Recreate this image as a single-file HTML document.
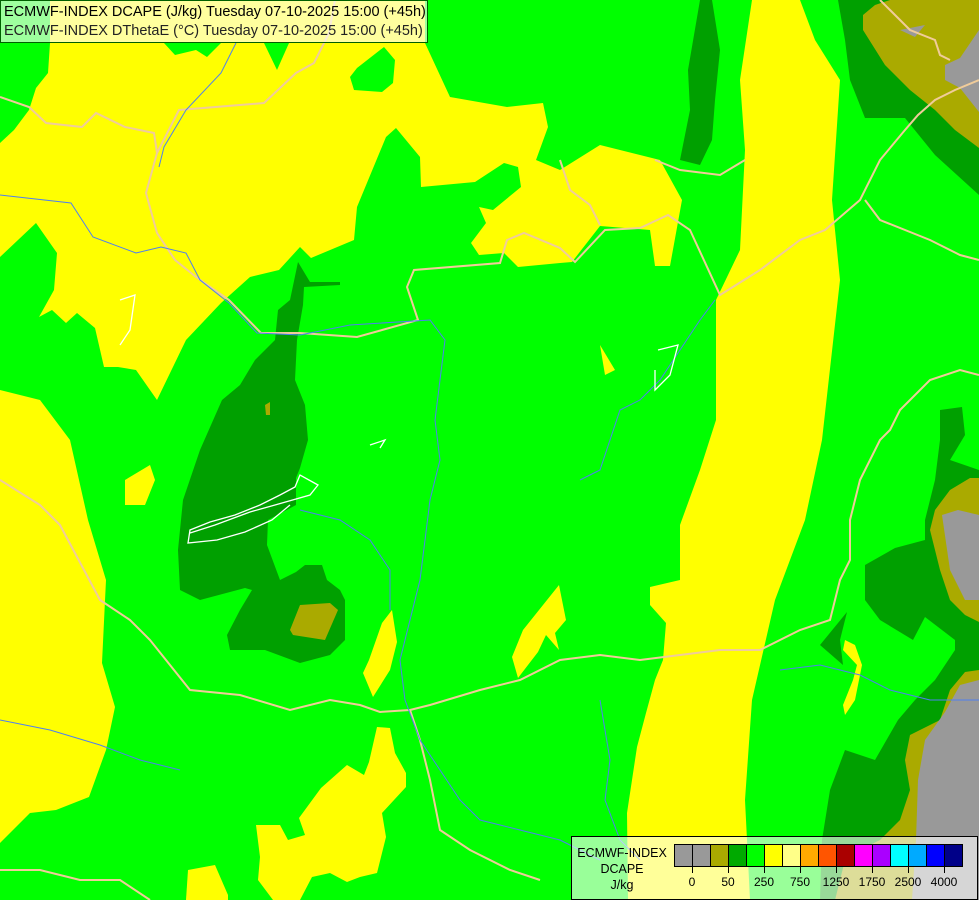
<!DOCTYPE html>
<html><head><meta charset="utf-8"><style>
html,body{margin:0;padding:0;width:979px;height:900px;overflow:hidden;background:#00ff00;font-family:"Liberation Sans",sans-serif}
svg{position:absolute;left:0;top:0}
.title{position:absolute;left:0;top:0;width:428px;height:43px;border:1px solid #006000;background:rgba(255,255,255,0.62);font-size:14.5px;line-height:19px;color:#000;padding-left:3px;box-sizing:border-box;white-space:nowrap}
.title div:first-child{margin-top:2px}
.title div:last-child{color:#222}
.leg{position:absolute;left:571px;top:836px;width:407px;height:64px;border:1px solid #000;box-sizing:border-box;background:rgba(255,255,255,0.6)}
.leg .t{position:absolute;left:2px;top:8px;width:96px;text-align:center;font-size:12.5px;line-height:16px;color:#000}
.sw{position:absolute;top:7px;height:23px;border:1px solid #000;box-sizing:border-box}
.lb{position:absolute;top:38px;font-size:12px;color:#000;width:40px;text-align:center}
.tk{position:absolute;top:30px;width:1px;height:6px;background:#000}
</style></head><body>
<svg width="979" height="900" viewBox="0 0 979 900">
<rect width="979" height="900" fill="#00ff00"/>
<g fill="#ffff00">
<polygon points="50,0 50,43 48,73 36,88 29,110 14,130 0,143 0,257 36,223 57,253 54,290 39,317 52,310 66,323 77,313 95,328 104,367 118,367 136,370 157,400 186,340 221,303 250,277 279,270 300,247 311,258 354,240 357,207 386,137 396,128 420,157 421,187 475,182 504,163 518,167 521,187 493,210 479,207 486,223 471,243 479,255 504,253 518,267 560,263 572,262 600,226 650,230 655,266 670,266 682,200 660,160 600,145 560,170 536,160 548,127 543,103 507,107 450,97 425,43 425,0"/>
<polygon points="0,390 40,400 70,440 88,520 106,580 102,663 115,707 106,750 89,797 56,810 30,813 0,843"/>
<polygon points="752,0 800,0 815,40 840,80 832,200 840,280 822,440 805,520 775,600 752,700 745,800 750,900 628,900 627,813 637,747 646,713 655,680 663,660 666,623 650,605 650,587 680,580 680,525 700,470 716,420 716,300 740,250 745,150 740,80"/>
<polygon points="273,900 258,880 260,857 256,825 280,825 288,840 305,835 299,818 321,788 347,765 364,775 369,762 377,727 390,728 395,753 406,773 406,787 382,813 386,837 377,873 360,877 347,882 330,873 312,877 300,900"/>
<polygon points="186,900 188,870 215,865 228,895 228,900"/>
<polygon points="382,623 392,610 397,642 390,670 373,697 363,673 369,660"/>
<polygon points="512,657 523,630 559,585 566,620 555,633 559,650 546,635 538,652 518,678"/>
<polygon points="125,480 150,465 155,480 145,505 125,505"/>
<polygon points="600,345 615,370 605,375"/>
<polygon points="845,640 855,645 862,665 855,700 845,715 843,705 853,680 857,665 843,650"/>
</g>
<g fill="#00ff00">
<polygon points="350,77 357,68 384,47 395,60 393,83 382,92 354,90"/>
<polygon points="164,43 175,55 196,50 207,57 221,43"/>
<polygon points="264,43 277,70 289,43"/>
</g>
<g fill="#00a000">
<polygon points="298,262 310,282 340,282 340,285 304,287 303,305 297,340 295,380 305,405 308,440 300,468 296,478 296,505 268,520 267,545 280,580 296,572 305,565 322,565 327,580 340,590 345,600 345,640 330,655 300,663 265,650 230,650 227,635 240,610 252,590 245,588 200,600 180,590 178,550 183,500 200,450 222,400 240,385 255,360 275,340 278,310 290,300"/>
<polygon points="700,0 712,0 720,50 715,100 712,140 700,165 680,160 690,110 688,70"/>
<polygon points="838,0 979,0 979,195 935,155 905,118 865,118 850,80 845,40"/>
<polygon points="940,410 962,407 965,435 950,460 979,470 979,900 820,900 822,840 830,790 845,750 875,760 898,720 915,700 935,680 955,650 955,640 925,617 913,640 880,620 865,600 865,565 895,548 925,540 925,520 935,480 940,440"/>
<polygon points="847,612 820,645 843,665 840,640"/>
</g>
<g fill="#aaaa00">
<polygon points="290,630 300,605 330,603 338,610 325,640 293,635"/>
<polygon points="265,405 270,402 270,415 266,415"/>
<polygon points="863,15 875,5 890,0 979,0 979,148 955,130 935,110 910,90 885,65 863,30"/>
<polygon points="935,510 950,490 970,478 979,478 979,622 965,615 950,600 940,570 930,530"/>
<polygon points="979,670 965,672 950,690 940,720 910,735 905,760 910,790 900,820 880,840 860,850 845,860 835,900 979,900"/>
</g>
<g fill="#999999">
<polygon points="979,30 960,58 945,65 945,80 960,88 979,112"/>
<polygon points="900,30 925,25 915,37"/>
<polygon points="942,515 958,510 979,515 979,600 965,600 950,570"/>
<polygon points="979,680 960,685 945,712 925,740 918,780 916,840 912,900 979,900"/>
</g>
<g fill="none" stroke="#f0cc9a" stroke-width="2">
<polyline points="0,97 29,107 46,123 82,127 96,113 125,127 154,133 157,153 146,193 157,233 175,260 196,277 229,300 261,333 300,333 357,337 418,320 407,287 414,270 500,263 507,240 524,233 560,248 575,262 605,230 640,228 668,215 690,230 720,295 760,270 800,240 825,230 860,200 880,160 905,130 918,115 935,100 955,90 979,80"/>
<polyline points="157,153 179,110 264,103 296,73 314,63 329,33 335,0"/>
<polyline points="0,480 40,505 60,525 100,600 130,620 150,640 190,690 240,695 290,710 330,700 360,705 380,712 410,710 430,705 480,690 520,680 560,660 600,655 640,660 680,655 720,650 760,650 800,630 830,620 840,580 850,560 850,520 860,480 880,440 890,430 900,410 930,380 960,370 979,375"/>
<polyline points="410,710 420,740 430,780 440,830 470,850 510,870 540,880"/>
<polyline points="0,870 40,870 80,880 120,880 150,900"/>
<polyline points="880,0 890,10 910,30 935,40 940,55 950,60"/>
<polyline points="560,160 570,190 590,205 600,225"/>
<polyline points="655,160 680,170 720,175 745,160"/>
<polyline points="865,200 880,220 930,240 960,255 979,260"/>
</g>
<g fill="none" stroke="#4f7ff0" stroke-width="1">
<polyline points="0,195 71,203 93,237 136,253 161,247 186,253 200,280 229,303 257,333 300,335 350,325 430,320 445,340 440,380 435,420 440,460 430,500 425,540 420,580 410,620 400,660 405,700 420,740 440,770 460,800 480,820 520,830 560,840 600,860"/>
<polyline points="236,43 221,73 186,110 164,147 159,167"/>
<polyline points="300,510 340,520 370,540 390,570 390,610"/>
<polyline points="580,480 600,470 610,440 620,410 640,400 660,380 680,350 700,320 715,300"/>
<polyline points="780,670 820,665 860,675 890,690 930,700 979,700"/>
<polyline points="0,720 50,730 100,745 140,760 180,770"/>
<polyline points="600,700 610,760 605,800 620,840 640,860"/>
</g>
<g fill="none" stroke="#ffffff" stroke-width="1.3">
<polyline points="190,533 215,525 250,512 275,505 310,495 318,485 300,475 295,487 280,495 260,505 235,515 210,522 190,530 188,543 217,540 245,532 272,520 290,505"/>
<polyline points="658,350 678,345 670,375 655,390 655,370"/>
<polyline points="120,300 135,295 130,330 120,345"/>
<polyline points="370,445 385,440 380,448"/>
</g>
</svg>
<div class="title"><div>ECMWF-INDEX DCAPE (J/kg) Tuesday 07-10-2025 15:00 (+45h)</div><div>ECMWF-INDEX DThetaE (°C) Tuesday 07-10-2025 15:00 (+45h)</div></div>
<div class="leg">
<div class="t">ECMWF-INDEX<br>DCAPE<br>J/kg</div>
<div class="sw" style="left:102px;width:19px;background:#999"></div>
<div class="sw" style="left:120px;width:19px;background:#999"></div>
<div class="sw" style="left:138px;width:19px;background:#aaaa00"></div>
<div class="sw" style="left:156px;width:19px;background:#00aa00"></div>
<div class="sw" style="left:174px;width:19px;background:#00ff00"></div>
<div class="sw" style="left:192px;width:19px;background:#ffff00"></div>
<div class="sw" style="left:210px;width:19px;background:#ffff88"></div>
<div class="sw" style="left:228px;width:19px;background:#ffaa00"></div>
<div class="sw" style="left:246px;width:19px;background:#ff5500"></div>
<div class="sw" style="left:264px;width:19px;background:#aa0000"></div>
<div class="sw" style="left:282px;width:19px;background:#ff00ff"></div>
<div class="sw" style="left:300px;width:19px;background:#aa00ff"></div>
<div class="sw" style="left:318px;width:19px;background:#00ffff"></div>
<div class="sw" style="left:336px;width:19px;background:#00aaff"></div>
<div class="sw" style="left:354px;width:19px;background:#0000ff"></div>
<div class="sw" style="left:372px;width:19px;background:#000088"></div>
<div class="tk" style="left:120px"></div><div class="tk" style="left:156px"></div><div class="tk" style="left:192px"></div><div class="tk" style="left:228px"></div><div class="tk" style="left:264px"></div><div class="tk" style="left:300px"></div><div class="tk" style="left:336px"></div><div class="tk" style="left:372px"></div>
<div class="lb" style="left:100px">0</div><div class="lb" style="left:136px">50</div><div class="lb" style="left:172px">250</div><div class="lb" style="left:208px">750</div><div class="lb" style="left:244px">1250</div><div class="lb" style="left:280px">1750</div><div class="lb" style="left:316px">2500</div><div class="lb" style="left:352px">4000</div>
</div>
</body></html>
